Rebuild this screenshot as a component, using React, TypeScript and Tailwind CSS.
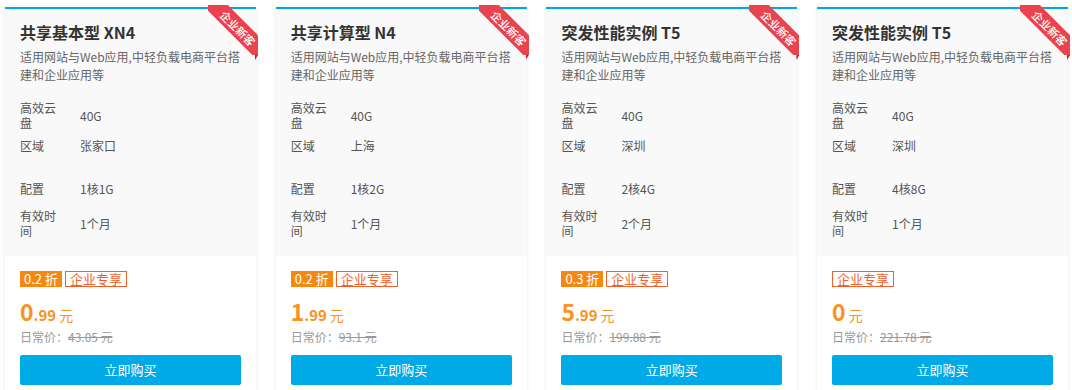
import React from "react";

interface Plan {
    title: string;
    disk: string;
    region: string;
    config: string;
    period: string;
    discount?: string;
    priceInt: string;
    priceDec?: string;
    original: string;
}

const plans: Plan[] = [
    { title: "共享基本型 XN4", disk: "40G", region: "张家口", config: "1核1G", period: "1个月", discount: "0.2 折", priceInt: "0", priceDec: ".99", original: "43.05" },
    { title: "共享计算型 N4", disk: "40G", region: "上海", config: "1核2G", period: "1个月", discount: "0.2 折", priceInt: "1", priceDec: ".99", original: "93.1" },
    { title: "突发性能实例 T5", disk: "40G", region: "深圳", config: "2核4G", period: "2个月", discount: "0.3 折", priceInt: "5", priceDec: ".99", original: "199.88" },
    { title: "突发性能实例 T5", disk: "40G", region: "深圳", config: "4核8G", period: "1个月", priceInt: "0", original: "221.78" },
];

const Ribbon = () => (
    <>
        <div className="absolute -top-[4px] -right-[2px] w-[50px] h-[50px] overflow-hidden">
            <div className="absolute left-[-10px] top-[14px] w-[80px] h-[18px] rotate-45 bg-[#e9434f] flex items-center justify-center text-white text-[11px] leading-[18px] font-medium">
                企业新客
            </div>
        </div>
        <div className="absolute -right-[2px] top-[46px] w-[3px] h-[5px] bg-[#b5202b] [clip-path:polygon(0_0,100%_0,0_100%)]" />
    </>
);

const SpecRow = ({ label, value, className }: { label: string; value: string; className?: string }) => (
    <div className={`flex items-center ${className ?? ""}`}>
        <div className="w-[40px] mr-[20px] text-[12px] leading-[15px] text-[#555]">{label}</div>
        <div className="text-[12px] leading-[15px] text-[#555]">{value}</div>
    </div>
);

const PlanCard = ({ plan }: { plan: Plan }) => (
    <div className="relative w-[251px] bg-white border-t-2 border-[#00a9e6] shadow-[0_0_4px_rgba(0,0,0,0.09)]">
        <Ribbon />
        <div className="bg-[#f9f9f9] px-[15px] pt-[12px] pb-[18px]">
            <h3 className="text-[16px] leading-[22px] font-semibold text-[#333]">{plan.title}</h3>
            <p className="mt-[5px] text-[12px] leading-[18px] text-[#666] whitespace-nowrap">
                适用网站与Web应用,中轻负载电商平台搭
                <br />
                建和企业应用等
            </p>
            <div className="mt-[16px] flex flex-col">
                <SpecRow label="高效云盘" value={plan.disk} />
                <SpecRow label="区域" value={plan.region} className="mt-[8px]" />
                <SpecRow label="配置" value={plan.config} className="mt-[28px]" />
                <SpecRow label="有效时间" value={plan.period} className="mt-[12px]" />
            </div>
        </div>
        <div className="px-[15px] pt-[15px] pb-[10px]">
            <div className="flex items-center gap-[3px] h-[16px]">
                {plan.discount && (
                    <span className="bg-[#f7880f] text-white text-[13px] leading-[16px] px-[4px] h-[16px]">{plan.discount}</span>
                )}
                <span className="border border-[#f2612a] text-[#f2612a] text-[13px] leading-[14px] px-[4px] h-[16px]">企业专享</span>
            </div>
            <div className="mt-[13px] flex items-baseline text-[#f7931e] h-[22px]">
                <span className="text-[23px] leading-[22px] font-bold">{plan.priceInt}</span>
                {plan.priceDec && <span className="text-[15px] font-bold">{plan.priceDec}</span>}
                <span className="ml-[3px] text-[14px]">元</span>
            </div>
            <div className="mt-[7px] text-[12px] leading-[16px] text-[#999]">
                日常价：<span className="line-through">{plan.original} 元</span>
            </div>
            <button className="mt-[10px] w-full h-[30px] bg-[#00aae6] text-white text-[13px] rounded-[2px]">
                立即购买
            </button>
        </div>
    </div>
);

export default function App() {
    return (
        <div className="w-[1072px] h-[390px] overflow-hidden bg-white font-['Noto_Sans_CJK_SC',sans-serif]">
            <div className="flex gap-[19.7px] pl-[5px] pt-[7px]">
                {plans.map((plan, i) => (
                    <PlanCard key={i} plan={plan} />
                ))}
            </div>
        </div>
    );
}
